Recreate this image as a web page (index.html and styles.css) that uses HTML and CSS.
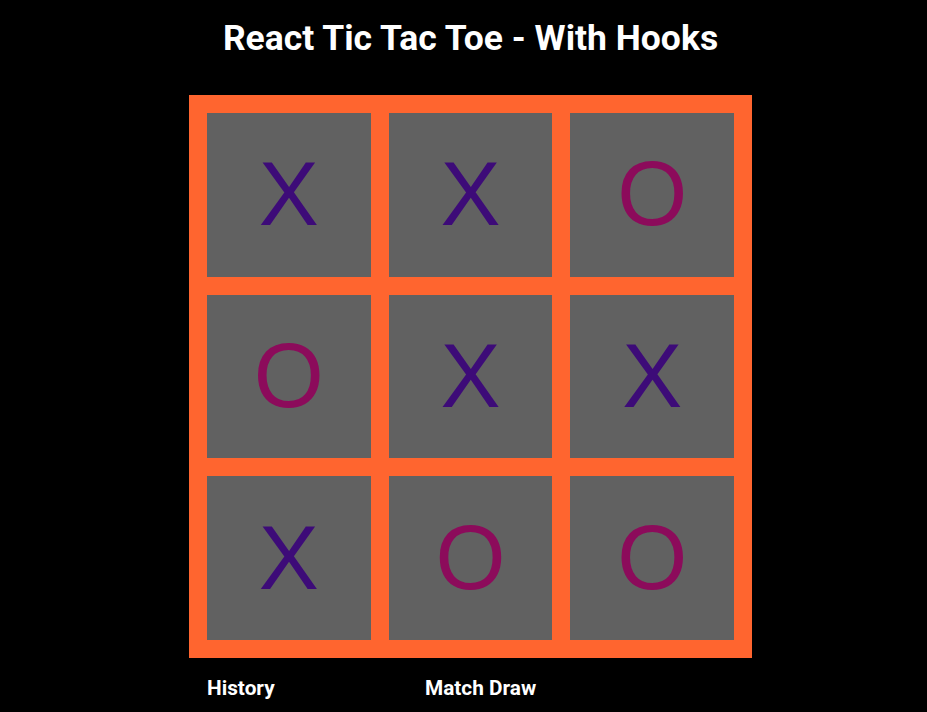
FILE: index.html
```html
<!DOCTYPE html>
<html lang="en">
<head>
<meta charset="utf-8">
<title>React Tic Tac Toe - With Hooks</title>
<link rel="stylesheet" href="styles.css">
</head>
<body>
<main class="game">
  <h1 class="title">React Tic Tac Toe - With Hooks</h1>
  <div class="board">
    <button class="cell x">X</button>
    <button class="cell x">X</button>
    <button class="cell o">O</button>
    <button class="cell o">O</button>
    <button class="cell x">X</button>
    <button class="cell x">X</button>
    <button class="cell x">X</button>
    <button class="cell o">O</button>
    <button class="cell o">O</button>
  </div>
  <div class="info">
    <div class="history">History</div>
    <div class="status">Match Draw</div>
  </div>
</main>
</body>
</html>
```

FILE: styles.css
```css
html, body {
  margin: 0;
  padding: 0;
  background: #000;
  height: 100%;
}

body {
  font-family: Roboto, "Liberation Sans", sans-serif;
  color: #fff;
  overflow: hidden;
}

.game {
  display: flex;
  flex-direction: column;
  align-items: center;
  padding-left: 14px;
}

.title {
  margin: 17px 0 0;
  font-size: 35.5px;
  font-weight: 700;
  line-height: normal;
}

.board {
  margin-top: 36px;
  width: 563px;
  height: 563px;
  box-sizing: border-box;
  padding: 18px;
  background: #ff652f;
  display: grid;
  grid-template-columns: repeat(3, 1fr);
  grid-template-rows: repeat(3, 1fr);
  gap: 18px;
}

.cell {
  border: none;
  margin: 0;
  padding: 0;
  background: #616161;
  display: flex;
  align-items: center;
  justify-content: center;
  font-family: "Liberation Sans", Arial, sans-serif;
  font-size: 90px;
  line-height: normal;
}

.cell.x {
  color: #3d0b78;
}

.cell.o {
  color: #8c0b5b;
}

.info {
  width: 563px;
  box-sizing: border-box;
  padding-left: 18px;
  margin-top: 18px;
  display: grid;
  grid-template-columns: 218px auto;
  font-size: 20.8px;
  font-weight: 700;
  line-height: normal;
}
```
